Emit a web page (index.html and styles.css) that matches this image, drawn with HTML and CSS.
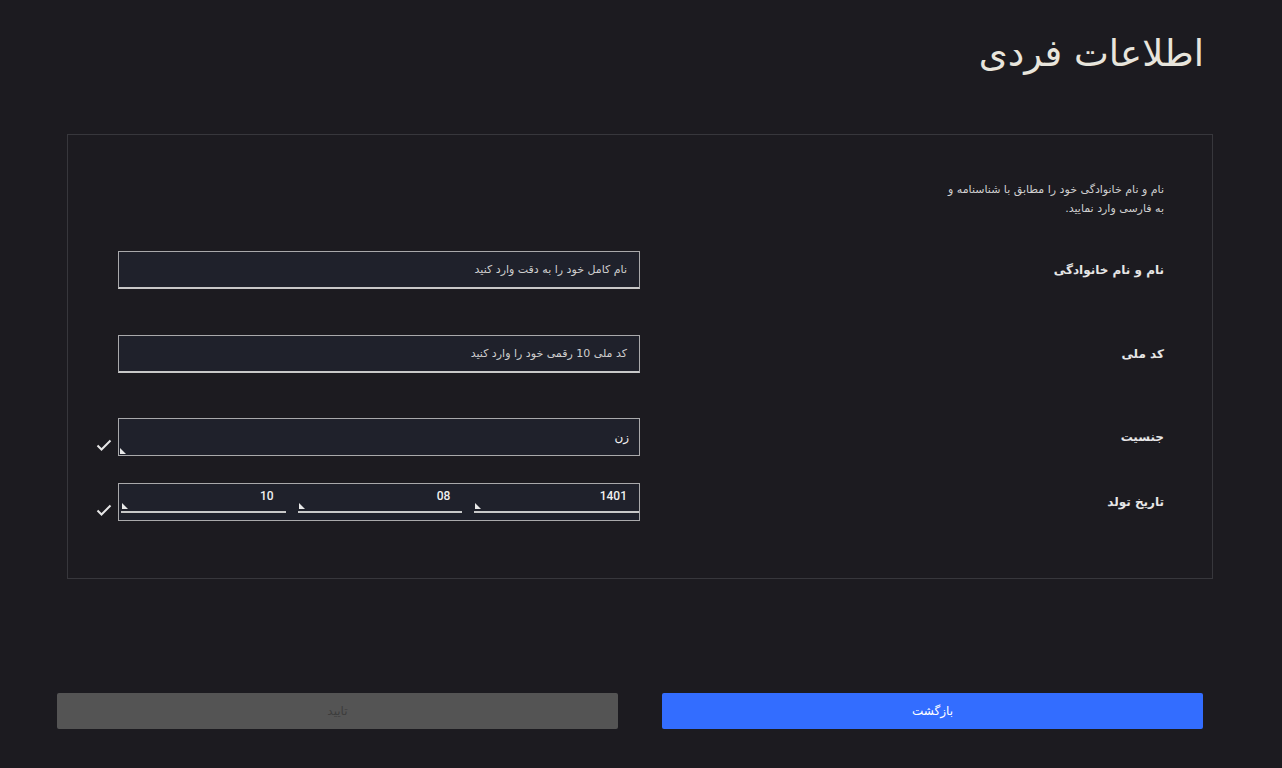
FILE: index.html
```html
<!DOCTYPE html>
<html lang="fa" dir="rtl">
<head>
<meta charset="utf-8">
<title>اطلاعات فردی</title>
<link rel="stylesheet" href="styles.css">
</head>
<body>
<div class="page">
  <h1 class="title">اطلاعات فردی</h1>

  <section class="card">
    <p class="intro">نام و نام خانوادگی خود را مطابق با شناسنامه و به فارسی وارد نمایید.</p>

    <div class="row row-name">
      <label class="label">نام و نام خانوادگی</label>
      <div class="field-wrap">
        <div class="field"><span class="placeholder">نام کامل خود را به دقت وارد کنید</span></div>
      </div>
    </div>

    <div class="row row-id">
      <label class="label">کد ملی</label>
      <div class="field-wrap">
        <div class="field"><span class="placeholder">کد ملی 10 رقمی خود را وارد کنید</span></div>
      </div>
    </div>

    <div class="row row-gender">
      <label class="label">جنسیت</label>
      <div class="field-wrap">
        <div class="field field-select">
          <span class="value">زن</span>
          <span class="corner"></span>
        </div>
        <svg class="check" width="16" height="14" viewBox="0 0 16 14"><path d="M1.5 7.5 L5.5 11.5 L14.5 2.5" fill="none" stroke="#e6e6e6" stroke-width="2"/></svg>
      </div>
    </div>

    <div class="row row-date">
      <label class="label">تاریخ تولد</label>
      <div class="field-wrap">
        <div class="field field-date">
          <div class="seg"><span class="value">1401</span><span class="corner"></span></div>
          <div class="seg"><span class="value">08</span><span class="corner"></span></div>
          <div class="seg"><span class="value">10</span><span class="corner"></span></div>
        </div>
        <svg class="check" width="16" height="14" viewBox="0 0 16 14"><path d="M1.5 7.5 L5.5 11.5 L14.5 2.5" fill="none" stroke="#e6e6e6" stroke-width="2"/></svg>
      </div>
    </div>
  </section>

  <div class="actions">
    <button class="btn btn-back">بازگشت</button>
    <button class="btn btn-submit" disabled>تایید</button>
  </div>
</div>
</body>
</html>
```

FILE: styles.css
```css
html, body {
  margin: 0;
  padding: 0;
  background: #1c1b20;
  color: #e8e8e8;
  font-family: "DejaVu Sans", sans-serif;
}

.page {
  width: 1282px;
  height: 768px;
  box-sizing: border-box;
  display: flex;
  flex-direction: column;
}

.title {
  margin: 29px 78px 0 0;
  font-size: 37px;
  font-weight: normal;
  line-height: 50px;
  color: #e8e5dc;
}

.card {
  margin: 55px 69px 0 67px;
  height: 445px;
  box-sizing: border-box;
  border: 1px solid #37373c;
  padding: 45px 48px 0 50px;
}

.intro {
  margin: 0 0 33px 0;
  width: 224px;
  font-size: 11px;
  line-height: 19px;
  color: #d0d0d0;
}

.row {
  display: flex;
  align-items: center;
  justify-content: space-between;
}

.row-name { margin-bottom: 46px; }
.row-id { margin-bottom: 45px; }
.row-gender { margin-bottom: 27px; }

.label {
  font-size: 12px;
  font-weight: bold;
  color: #e6e6e6;
}

.field-wrap {
  position: relative;
  width: 522px;
}

.field {
  height: 38px;
  box-sizing: border-box;
  background: #1f212b;
  border: 1px solid #a9a9ab;
  border-bottom: 2px solid #c8c8c8;
  display: flex;
  align-items: center;
  padding: 0 12px;
  position: relative;
}

.placeholder {
  font-size: 11px;
  color: #cfcfcf;
}

.value {
  font-family: "Roboto", "DejaVu Sans", sans-serif;
  font-size: 12px;
  font-weight: 500;
  color: #f0f0f0;
}

.field-select {
  border-bottom: 1px solid #a9a9ab;
  padding-right: 10px;
}

.field-select .value {
  font-weight: normal;
  font-size: 12px;
}

.corner {
  position: absolute;
  left: 1px;
  bottom: 1px;
  width: 0;
  height: 0;
  border-style: solid;
  border-width: 6px 0 0 6px;
  border-color: transparent transparent transparent #e8e8e8;
}

.field-date {
  border-bottom: 1px solid #a9a9ab;
  padding: 0 0 0 2px;
  gap: 12px;
  align-items: stretch;
}

.seg {
  position: relative;
  flex: 1;
  display: flex;
  justify-content: flex-start;
  padding: 5px 12px 0 12px;
  margin-bottom: 7px;
  border-bottom: 2px solid #c8c8c8;
}

.seg .corner {
  left: 1px;
  bottom: 2px;
}

.check {
  position: absolute;
  left: -22px;
  bottom: 4px;
}

.actions {
  margin: 114px 79px 0 57px;
  display: flex;
  gap: 44px;
}

.btn {
  height: 36px;
  border: none;
  border-radius: 2px;
  font-family: "DejaVu Sans", sans-serif;
  font-size: 12px;
  font-weight: normal;
}

.btn-back {
  width: 541px;
  background: #336dff;
  color: #ffffff;
}

.btn-submit {
  flex: 1;
  background: #545454;
  color: #3d3d3d;
}
```
